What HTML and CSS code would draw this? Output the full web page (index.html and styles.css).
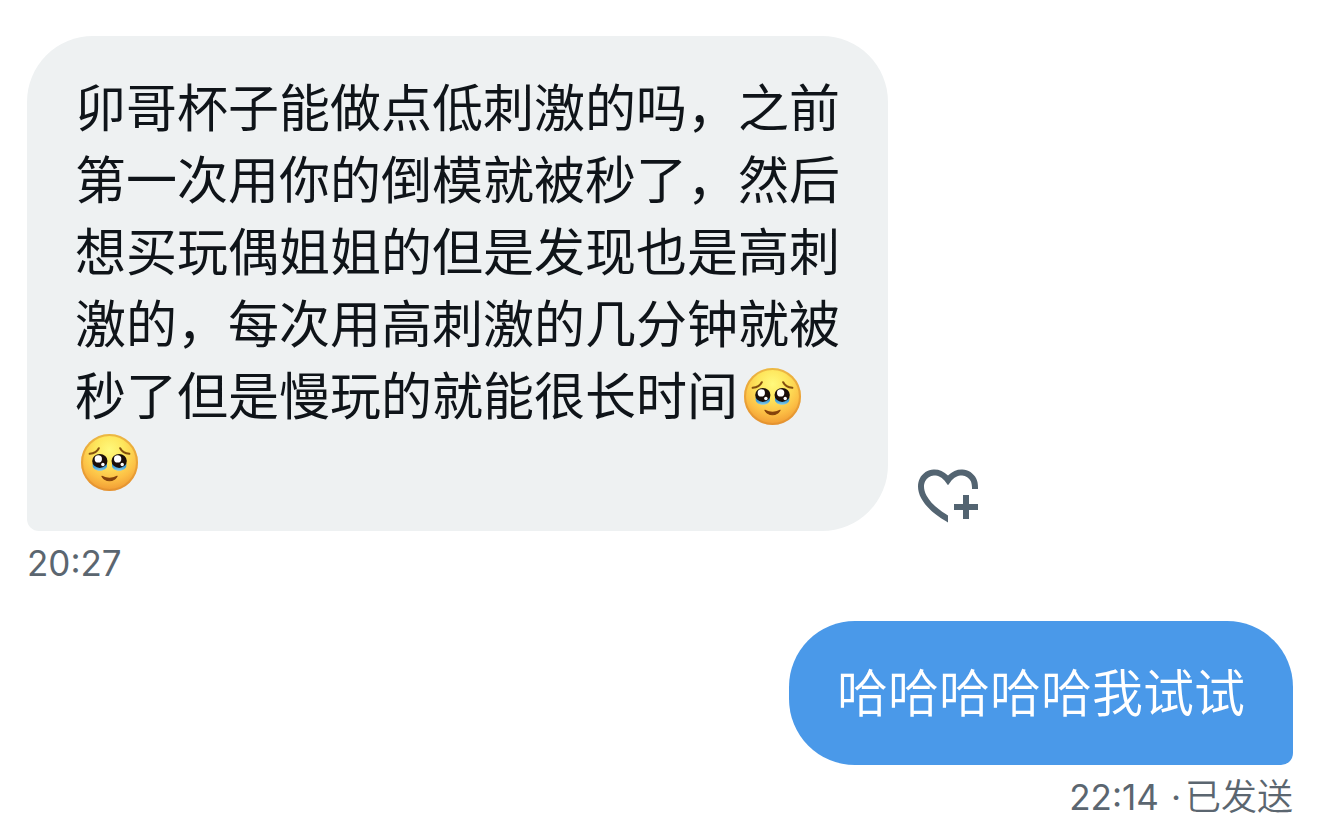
FILE: index.html
```html
<!DOCTYPE html>
<html lang="zh-CN">
<head>
    <meta charset="UTF-8">
    <meta name="viewport" content="width=device-width, initial-scale=1">
    <title>私信</title>
    <link rel="stylesheet" href="styles.css">
</head>
<body>
    <!-- emoji -->
    <svg class="defs" aria-hidden="true">
        <defs>
            <radialGradient id="skin" cx="50%" cy="28%" r="75%">
                <stop offset="0" stop-color="#fff97c"/>
                <stop offset="0.35" stop-color="#fee65c"/>
                <stop offset="0.7" stop-color="#fcbf45"/>
                <stop offset="1" stop-color="#ee9430"/>
            </radialGradient>
            <linearGradient id="tear" x1="0" y1="0" x2="0" y2="1">
                <stop offset="0" stop-color="#2c86c4"/>
                <stop offset="0.6" stop-color="#4fa9dc"/>
                <stop offset="1" stop-color="#8fcfe6"/>
            </linearGradient>
            <symbol id="face" viewBox="0 0 56 56">
                <circle cx="28" cy="28" r="28" fill="url(#skin)"/>
                <circle cx="28" cy="28" r="27" fill="none" stroke="#d98a2b" stroke-opacity="0.5" stroke-width="2"/>
                <path d="M8.500 19.500C12.500 19 16 17 17.500 14M47.500 19.500C43.500 19 40 17 38.500 14" fill="none" stroke="#84500f" stroke-width="2" stroke-linecap="round"/>
                <path d="M11.500 29H25.500V32C24 37.500 13 37.500 11.500 32ZM30.500 29H44.500V32C43 37.500 32 37.500 30.500 32Z" fill="url(#tear)"/>
                <ellipse cx="18.500" cy="26.500" rx="7.500" ry="6.800" fill="#1b0f0a"/>
                <ellipse cx="37.500" cy="26.500" rx="7.500" ry="6.800" fill="#1b0f0a"/>
                <circle cx="17" cy="24.500" r="3.600" fill="#fff"/>
                <circle cx="36" cy="24.500" r="3.600" fill="#fff"/>
                <circle cx="21.500" cy="30" r="1.700" fill="#fff"/>
                <circle cx="40.500" cy="30" r="1.700" fill="#fff"/>
                <path d="M20.500 41.500C24 47.500 32 47.500 35.500 41.500C31 44 25 44 20.500 41.500Z" fill="#84420c" stroke="#84420c" stroke-width="1" stroke-linejoin="round"/>
            </symbol>
        </defs>
    </svg>

    <main class="chat">
        <section class="message received">
            <div class="row">
                <div class="bubble">
                    <p class="text">卯哥杯子能做点低刺激的吗，之前第一次用你的倒模就被秒了，然后想买玩偶姐姐的但是发现也是高刺激的，每次用高刺激的几分钟就被秒了但是慢玩的就能很长时间<svg class="emoji" role="img" aria-label="🥹"><use href="#face"/></svg></p>
                    <p class="text emoji-line"><svg class="emoji" role="img" aria-label="🥹"><use href="#face"/></svg></p>
                </div>
                <button class="react" type="button" aria-label="添加回应">
                    <svg viewBox="0 0 24 24" aria-hidden="true">
                        <path d="M12 21.160l-.5-.3C7.120 18.310 4.470 15.670 3.116 13.190c-1.360-2.500-1.410-4.860-.514-6.670.887-1.790 2.647-2.910 4.601-3.010 1.651-.09 3.368.56 4.798 2.010 1.429-1.450 3.146-2.100 4.796-2.010 1.954.1 3.714 1.220 4.601 3.010.46.9.65 2.030.6 3.480H20c.04-.98-.1-1.870-.39-2.600-.56-1.130-1.670-1.830-2.910-1.900-1.220-.06-2.680.51-3.890 2.160L12 8.750l-.81-1.090C9.980 6.010 8.530 5.440 7.300 5.500c-1.240.07-2.350.78-2.910 1.910-.55 1.120-.63 2.780.48 4.820 1.070 1.970 3.260 4.270 7.130 6.610z"/>
                        <path d="M17 12h2v3h3v2h-3v3h-2v-3h-3v-2h3z"/>
                    </svg>
                </button>
            </div>
            <div class="meta"><time>20:27</time></div>
        </section>

        <section class="message sent">
            <div class="bubble">
                <p class="text">哈哈哈哈哈我试试</p>
            </div>
            <div class="meta"><time>22:14</time><span class="dot">·</span><span class="status">已发送</span></div>
        </section>
    </main>
</body>
</html>
```
FILE: styles.css
```css
*{
    margin: 0;
    padding: 0;
    box-sizing: border-box;
}
body{
    background: #fff;
    color: #0f1419;
    font-family: Inter, "Noto Sans CJK SC", sans-serif;
}
.defs{
    position: absolute;
    width: 0;
    height: 0;
}
.chat{
    display: flex;
    flex-direction: column;
    gap: 38px;
    padding: 36px 27px 0;
}
.message{
    display: flex;
    flex-direction: column;
    align-items: flex-start;
}
.sent{
    align-items: flex-end;
}
.row{
    display: flex;
    align-items: flex-end;
    gap: 24px;
}
.bubble{
    padding: 33px 48px 39px;
    border-radius: 66px 66px 66px 12px;
    background: #eef1f2;
}
.sent .bubble{
    border-radius: 66px 66px 12px 66px;
    background: #4a99e9;
    color: #fff;
}
.text{
    max-width: 15em;
    font-family: "Noto Sans CJK SC", sans-serif;
    font-size: 51px;
    font-weight: 400;
    line-height: 72px;
}
.sent .text{
    font-weight: 350;
}
.emoji{
    width: 57px;
    height: 57px;
    margin: 0 6px;
    vertical-align: -10px;
}
/* the emoji sets the height of its own line */
.emoji-line .emoji{
    display: block;
    margin-top: 5px;
    margin-bottom: 1px;
}
.react{
    flex: none;
    width: 72px;
    height: 72px;
    border: 0;
    background: none;
    cursor: pointer;
}
.react svg{
    display: block;
    width: 100%;
    height: 100%;
    fill: #536471;
}
.meta{
    padding-top: 12px;
    color: #5b6670;
    font-size: 35px;
    line-height: 40px;
}
.dot{
    margin: 0 4px 0 12px;
}
.status{
    font-size: 36px;
    font-weight: 350;
}
```
